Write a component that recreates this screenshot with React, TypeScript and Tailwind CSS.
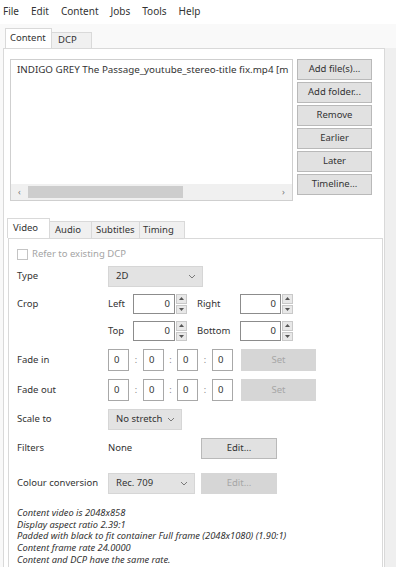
import React from "react";

const font = { fontFamily: '"Noto Sans", "Open Sans", Arial, sans-serif' };

function Chevron() {
  return (
    <svg width="8" height="5" viewBox="0 0 8 5" className="shrink-0">
      <path d="M1 1 L4 4 L7 1" fill="none" stroke="#7a7a7a" strokeWidth="1" />
    </svg>
  );
}

function Select({ label, w }: { label: string; w: string }) {
  return (
    <div className={`${w} h-[21px] flex items-center justify-between pl-[7px] pr-[6px] bg-[#e3e3e3] border border-[#d6d6d6] text-[9.5px] text-[#333]`}>
      <span>{label}</span>
      <Chevron />
    </div>
  );
}

function Spin() {
  return (
    <div className="w-[11px] h-[20px] ml-[1px] flex flex-col gap-[1px]">
      <div className="flex-1 bg-[#e8e8e8] border border-[#c9c9c9] flex items-center justify-center">
        <svg width="5" height="3" viewBox="0 0 5 3"><path d="M0 3 L2.5 0 L5 3Z" fill="#555" /></svg>
      </div>
      <div className="flex-1 bg-[#e8e8e8] border border-[#c9c9c9] flex items-center justify-center">
        <svg width="5" height="3" viewBox="0 0 5 3"><path d="M0 0 L2.5 3 L5 0Z" fill="#555" /></svg>
      </div>
    </div>
  );
}

function NumBox({ w }: { w: string }) {
  return (
    <div className={`${w} h-[20px] border border-[#8c8c8c] bg-white flex items-center justify-end pr-[4px] text-[9.5px] text-[#333]`}>0</div>
  );
}

function TimeBox() {
  return (
    <div className="w-[21px] h-[22px] border border-[#a8a8a8] bg-white flex items-center pl-[5px] text-[9.5px] text-[#333]">0</div>
  );
}

function TimeRow() {
  return (
    <div className="flex items-center">
      <TimeBox />
      <span className="w-[14px] text-center text-[9px] text-[#888]">:</span>
      <TimeBox />
      <span className="w-[13px] text-center text-[9px] text-[#888]">:</span>
      <TimeBox />
      <span className="w-[14px] text-center text-[9px] text-[#888]">:</span>
      <TimeBox />
      <div className="ml-[8px] w-[75px] h-[22px] bg-[#d6d6d6] flex items-center justify-center text-[9.5px] text-[#a6a6a6]">Set</div>
    </div>
  );
}

function Btn({ label }: { label: string }) {
  return (
    <div className="h-[21px] bg-[#e1e1e1] border border-[#b9b9b9] flex items-center justify-center text-[9.5px] text-[#333]">{label}</div>
  );
}

export default function App() {
  const labelCls = "w-[91px] shrink-0 text-[9.5px] text-[#333]";
  return (
    <div className="w-[396px] h-[578px] bg-white overflow-hidden flex flex-col" style={font}>
      {/* menu bar */}
      <div className="h-[24px] shrink-0 flex items-center pl-[3px] gap-[12px] text-[10px] text-[#333] pb-[2px]">
        <span>File</span>
        <span>Edit</span>
        <span>Content</span>
        <span>Jobs</span>
        <span>Tools</span>
        <span>Help</span>
      </div>

      {/* top tabs */}
      <div className="h-[24px] shrink-0 flex items-end pl-[5px] bg-[#f9f9f9]">
        <div className="w-[47px] h-[20px] bg-white border border-b-0 border-[#d9d9d9] flex items-center pl-[4px] text-[9.5px] text-[#333]">Content</div>
        <div className="w-[40px] h-[16px] bg-[#f0f0f0] border border-l-0 border-b-0 border-[#d9d9d9] flex items-center pl-[6px] text-[9.5px] text-[#333]">DCP</div>
      </div>

      <div className="h-[519px] shrink-0 flex bg-[#f9f9f9]">
        {/* main panel */}
        <div className="ml-[3px] w-[381px] bg-white border-l border-t border-[#d9d9d9] flex flex-col">
          <div className="flex mt-[10px] ml-[6px]">
            <div className="w-[283px] h-[142px] border border-[#cfcfcf] flex flex-col">
              <div className="flex-1 pl-[6px] pt-[3px] text-[9.8px] text-[#333] whitespace-nowrap overflow-hidden">
                INDIGO GREY The Passage_youtube_stereo-title fix.mp4 [m
              </div>
              <div className="h-[16px] bg-[#f0f0f0] flex items-center">
                <span className="w-[17px] text-center text-[9px] text-[#777]">‹</span>
                <div className="w-[155px] h-[12px] bg-[#cdcdcd]" />
                <div className="flex-1" />
                <span className="w-[17px] text-center text-[9px] text-[#777]">›</span>
              </div>
            </div>
            <div className="ml-[4px] w-[75px] flex flex-col gap-[2px]">
              <Btn label="Add file(s)..." />
              <Btn label="Add folder..." />
              <Btn label="Remove" />
              <Btn label="Earlier" />
              <Btn label="Later" />
              <Btn label="Timeline..." />
            </div>
          </div>

          {/* sub tabs */}
          <div className="mt-[17px] ml-[3px] flex items-end h-[20px]">
            <div className="w-[43px] h-[20px] bg-white border border-b-0 border-[#d9d9d9] flex items-center pl-[5px] text-[9.5px] text-[#333]">Video</div>
            <div className="w-[42px] h-[17px] bg-[#f0f0f0] border border-l-0 border-b-0 border-[#d9d9d9] flex items-center pl-[5px] text-[9.5px] text-[#333]">Audio</div>
            <div className="w-[48px] h-[17px] bg-[#f0f0f0] border border-l-0 border-b-0 border-[#d9d9d9] flex items-center pl-[4px] text-[9.5px] text-[#333]">Subtitles</div>
            <div className="w-[45px] h-[17px] bg-[#f0f0f0] border border-l-0 border-b-0 border-[#d9d9d9] flex items-center pl-[3px] text-[9.5px] text-[#333]">Timing</div>
          </div>

          {/* inner panel */}
          <div className="ml-[4px] mr-[1px] flex-1 border border-b-0 border-[#d9d9d9] flex flex-col pl-[8px]">
            <div className="mt-[5px] h-[20px] flex items-center">
              <div className="w-[11px] h-[11px] border border-[#c4c4c4] bg-white" />
              <span className="ml-[4px] text-[9.5px] text-[#a4a4a4]">Refer to existing DCP</span>
            </div>

            <div className="mt-[2px] h-[21px] flex items-center">
              <span className={labelCls}>Type</span>
              <Select label="2D" w="w-[95px]" />
            </div>

            <div className="mt-[7px] h-[20px] flex items-center">
              <span className={labelCls}>Crop</span>
              <span className="w-[25px] text-[9.5px] text-[#333]">Left</span>
              <NumBox w="w-[42px]" />
              <Spin />
              <span className="ml-[10px] w-[43px] text-[9.5px] text-[#333]">Right</span>
              <NumBox w="w-[41px]" />
              <Spin />
            </div>

            <div className="mt-[7px] h-[20px] flex items-center">
              <span className={labelCls} />
              <span className="w-[25px] text-[9.5px] text-[#333]">Top</span>
              <NumBox w="w-[42px]" />
              <Spin />
              <span className="ml-[10px] w-[43px] text-[9.5px] text-[#333]">Bottom</span>
              <NumBox w="w-[41px]" />
              <Spin />
            </div>

            <div className="mt-[8px] h-[22px] flex items-center">
              <span className={labelCls}>Fade in</span>
              <TimeRow />
            </div>

            <div className="mt-[8px] h-[22px] flex items-center">
              <span className={labelCls}>Fade out</span>
              <TimeRow />
            </div>

            <div className="mt-[8px] h-[21px] flex items-center">
              <span className={labelCls}>Scale to</span>
              <Select label="No stretch" w="w-[74px]" />
            </div>

            <div className="mt-[8px] h-[21px] flex items-center">
              <span className={labelCls}>Filters</span>
              <span className="w-[93px] text-[9.5px] text-[#333]">None</span>
              <div className="w-[76px] h-[21px] bg-[#e1e1e1] border border-[#b9b9b9] flex items-center justify-center text-[9.5px] text-[#333]">Edit...</div>
            </div>

            <div className="mt-[14px] h-[21px] flex items-center">
              <span className={labelCls}>Colour conversion</span>
              <Select label="Rec. 709" w="w-[87px]" />
              <div className="ml-[6px] w-[76px] h-[21px] bg-[#d6d6d6] flex items-center justify-center text-[9.5px] text-[#a6a6a6]">Edit...</div>
            </div>

            <div className="mt-[13px] text-[9.3px] italic leading-[11.7px] text-[#333] whitespace-nowrap">
              <div>Content video is 2048x858</div>
              <div>Display aspect ratio 2.39:1</div>
              <div>Padded with black to fit container Full frame (2048x1080) (1.90:1)</div>
              <div>Content frame rate 24.0000</div>
              <div>Content and DCP have the same rate.</div>
            </div>
          </div>
        </div>
        <div className="flex-1 bg-[#efefef] border-l border-[#d9d9d9]" />
      </div>
    </div>
  );
}
